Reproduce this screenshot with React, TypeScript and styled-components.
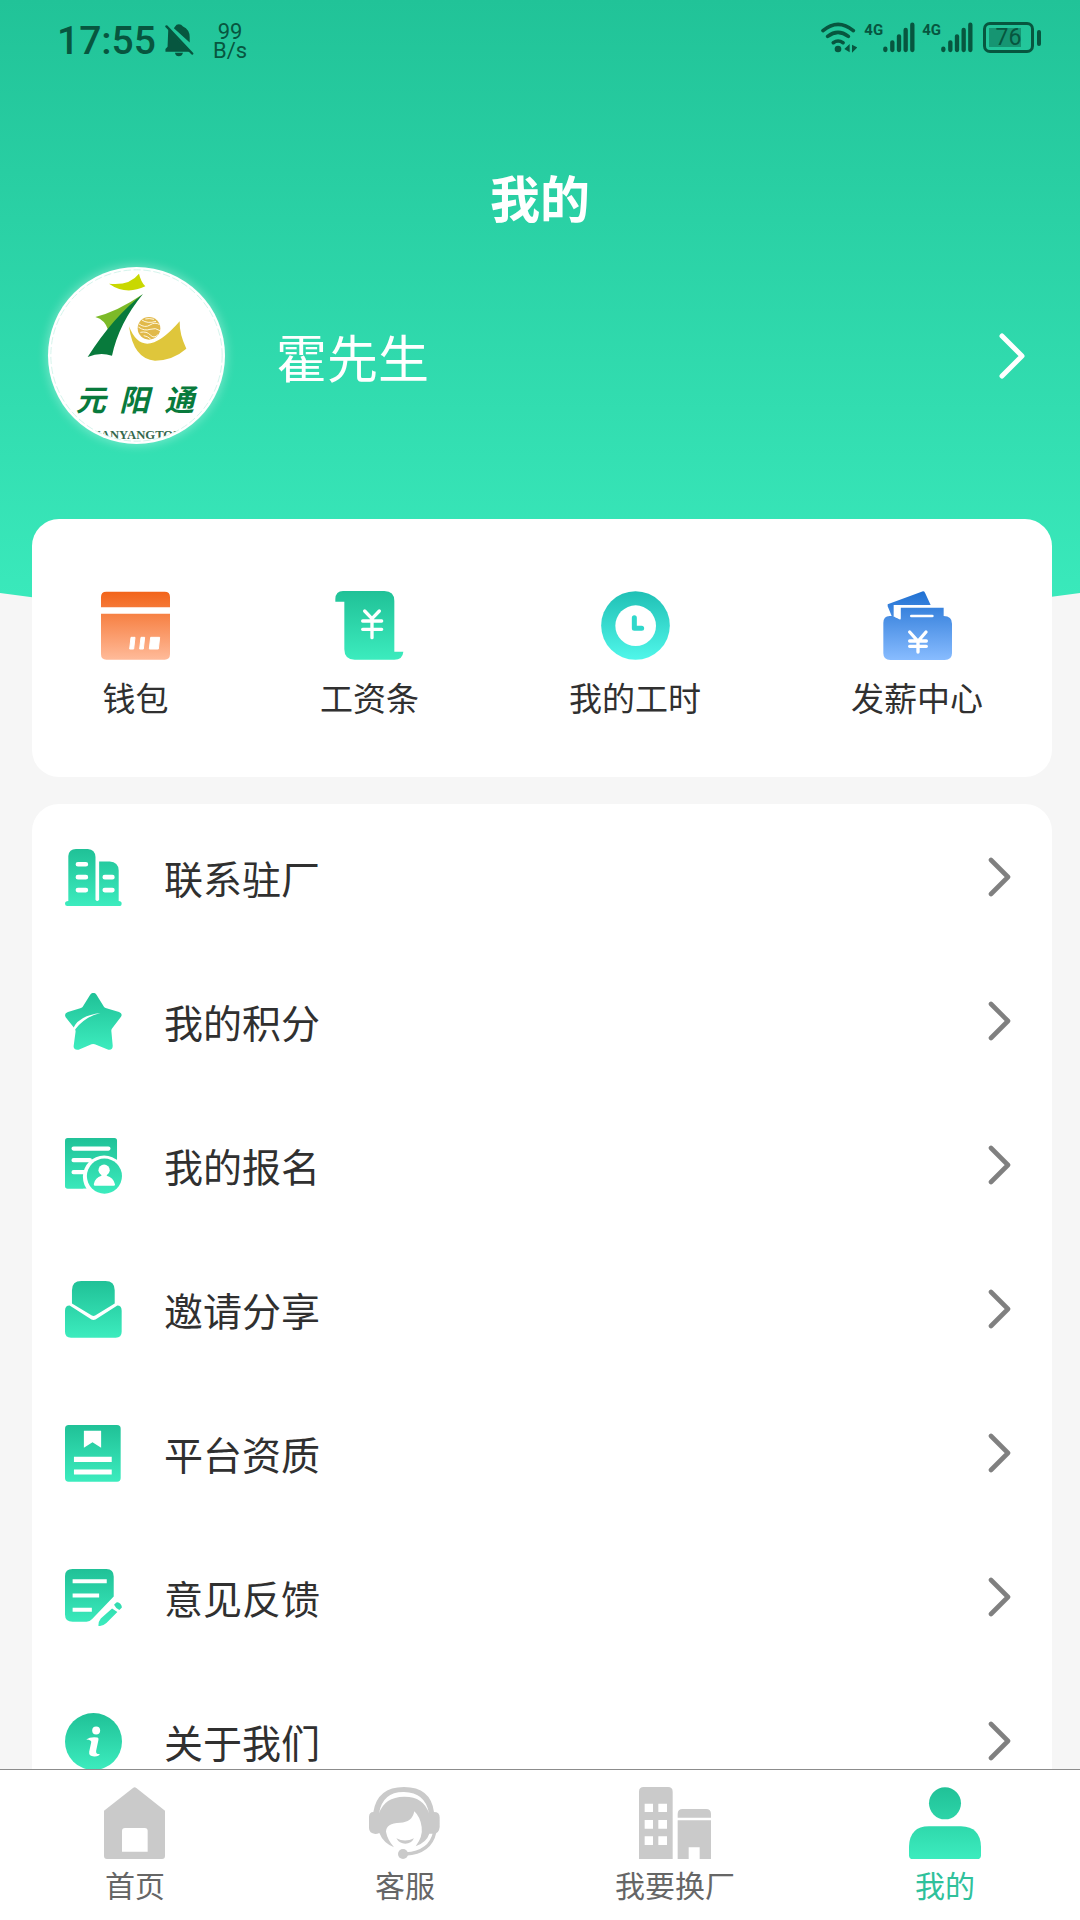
import React, { useId } from "react";
import styled, { createGlobalStyle } from "styled-components";

const GlobalStyle = createGlobalStyle`
  *, *::before, *::after { box-sizing: border-box; }
  body {
    margin: 0;
    background: #f6f6f6;
    color: #303030;
    font-family: "Noto Sans CJK SC", sans-serif;
  }
  h1, p, ul { margin: 0; padding: 0; }
  ul { list-style: none; }
  a { color: inherit; text-decoration: none; }
  svg { display: block; flex: none; }
`;

const Screen = styled.div`
  display: flex;
  flex-direction: column;
  height: 100vh;
`;

const Content = styled.main`
  flex: 1;
  min-height: 0;
  overflow-y: auto;
  scrollbar-width: none;
`;

const Hero = styled.header`
  padding-bottom: 185px;
  background: linear-gradient(180deg, #21c398 0%, #3bebbd 100%);
  clip-path: ellipse(150% 100% at 50% 0);
  color: #fff;
`;

const StatusBar = styled.div`
  display: flex;
  align-items: flex-start;
  justify-content: space-between;
  height: 76px;
  padding: 22px 39px 0 57px;
  color: #07563f;
  font-family: Roboto, sans-serif;
`;

const StatusGroup = styled.div<{ $height: number; $gap: number }>`
  display: flex;
  align-items: center;
  gap: ${(p) => p.$gap}px;
  height: ${(p) => p.$height}px;
`;

const Clock = styled.time`
  font-size: 39px;
  font-weight: 500;
  line-height: 40px;
`;

const NetSpeed = styled.span`
  display: flex;
  flex-direction: column;
  align-items: center;
  margin-left: 10px;
  font-size: 22px;
  line-height: 19px;
`;

const Signal = styled.span`
  display: flex;
  align-items: flex-start;
`;

const NetType = styled.span`
  font-size: 15px;
  font-weight: 700;
  line-height: 16px;
`;

const Battery = styled.span`
  display: flex;
  align-items: center;
  gap: 3px;
  margin-left: 3px;
  &::after {
    content: "";
    width: 4px;
    height: 16px;
    border-radius: 2px;
    background: currentColor;
  }
`;

const BatteryCell = styled.span`
  width: 51px;
  height: 31px;
  padding: 3px;
  border: 3px solid currentColor;
  border-radius: 7px;
  font-size: 23px;
  line-height: 20px;
  text-align: center;
  background: linear-gradient(#169572, #169572) 3px 3px / 32px 19px no-repeat;
`;

const PageTitle = styled.h1`
  padding-top: 90px;
  font-size: 50px;
  font-weight: 700;
  line-height: 60px;
  text-align: center;
`;

const Profile = styled.a`
  display: flex;
  align-items: center;
  margin-top: 41px;
  padding: 0 55px 0 48px;
`;

const Avatar = styled.span`
  width: 177px;
  height: 177px;
  border-radius: 50%;
  background: #fff;
  box-shadow: 0 0 10px 2px rgba(255, 255, 255, 0.3);
`;

const UserName = styled.span`
  flex: 1;
  padding-left: 51px;
  font-size: 51px;
  line-height: 60px;
`;

const Card = styled.section`
  position: relative;
  margin: 0 28px 27px 32px;
  border-radius: 27px;
  background: #fff;
`;

const QuickCard = styled(Card)`
  margin-top: -110px;
  padding: 72px 69px 60px;
`;

const MenuCard = styled(Card)`
  padding: 1px 0;
`;

const QuickList = styled.ul`
  display: flex;
  justify-content: space-between;
`;

const QuickLink = styled.a`
  display: flex;
  flex-direction: column;
  align-items: center;
  gap: 17px;
  font-size: 33px;
  line-height: 40px;
`;

const MenuLink = styled.a`
  display: flex;
  align-items: center;
  height: 144px;
  padding: 0 41px 0 33px;
`;

const MenuLabel = styled.span`
  flex: 1;
  padding-left: 42px;
  font-size: 39px;
  line-height: 48px;
`;

const TabBar = styled.nav`
  display: grid;
  grid-template-columns: repeat(4, 1fr);
  border-top: 1px solid #8c8c8c;
  background: #fff;
`;

const Tab = styled.a<{ $active?: boolean }>`
  display: flex;
  flex-direction: column;
  align-items: center;
  gap: 7px;
  padding: 17px 0 18px;
  font-size: 30px;
  line-height: 36px;
  color: ${(p) => (p.$active ? "#2fc19b" : "#666")};
`;

type Tone = "green" | "orange" | "teal" | "blue";
const tones: Record<Tone, [string, string]> = {
  green: ["#20c197", "#3cecbe"],
  orange: ["#f26318", "#ffbb9a"],
  teal: ["#20c0b5", "#50f7ea"],
  blue: ["#1f70d2", "#88bcff"],
};

type IconProps = {
  size: number;
  x: number;
  y: number;
  span: number;
  tone?: Tone;
  children: React.ReactNode;
};

function GradientIcon({ size, x, y, span, tone = "green", children }: IconProps) {
  const id = useId();
  return (
    <svg width={size} height={size} viewBox={`${x} ${y} ${span} ${span}`} fill={`url(#${id})`} aria-hidden="true">
      <defs>
        <linearGradient id={id} gradientUnits="userSpaceOnUse" x1={x} x2={x} y1={y} y2={y + span}>
          <stop offset="0" stopColor={tones[tone][0]} />
          <stop offset="1" stopColor={tones[tone][1]} />
        </linearGradient>
      </defs>
      {children}
    </svg>
  );
}

const Chevron = ({ large }: { large?: boolean }) => (
  <svg
    width={large ? 26 : 23}
    height={large ? 46 : 40}
    viewBox={large ? "0 0 26 46" : "0 0 23 40"}
    fill="none"
    stroke={large ? "#fff" : "#808080"}
    strokeWidth={large ? 5 : 4.6}
    strokeLinecap="round"
    strokeLinejoin="round"
    aria-hidden="true"
  >
    <path d={large ? "M3 3 23 23 3 43" : "M3 3 20 20 3 37"} />
  </svg>
);

const MutedBell = () => (
  <svg width="29" height="33" viewBox="480 68 82 94" fill="currentColor" aria-hidden="true">
    <path d="M508 76Q512 69 519 69T531 75Q550 84 550 105V121L505 80ZM489 84 550 147H481V139L487 133Z" />
    <path d="M508 150H531Q528 160 519 160T508 150Z" />
    <path d="M484 75 557 152" stroke="currentColor" strokeWidth="7" strokeLinecap="round" />
  </svg>
);

const Wifi = () => (
  <svg width="36" height="31" viewBox="129 65 108 93" fill="currentColor" aria-hidden="true">
    <g fill="none" stroke="currentColor" strokeWidth="11" strokeLinecap="round">
      <path d="M135 91Q180 53 226 91M149 108Q180 84 211 108M166 127Q180 117 195 127" />
    </g>
    <circle cx="180" cy="146" r="10" />
    <path d="M199 146 215 131V156ZM222 133V157L238 141Z" />
  </svg>
);

const SignalBars = () => (
  <svg width="32" height="31" viewBox="307 65 96 93" stroke="currentColor" strokeWidth="13" strokeLinecap="round" aria-hidden="true">
    <path d="M314 145V149M335 126V149M355 108V149M375 89V149M395 73V149" />
  </svg>
);

const Logo = () => {
  const clip = useId();
  return (
    <svg width="177" height="177" viewBox="54 51 531 531" role="img" aria-label="元阳通">
      <defs>
        <clipPath id={clip}>
          <circle cx="319.5" cy="316.5" r="256" />
        </clipPath>
      </defs>
      <circle cx="319.5" cy="316.5" r="257" fill="none" stroke="#bfeee2" strokeWidth="2" strokeDasharray="22 8" />
      <path d="M237 101Q298 108 327 71Q332 94 346 109Q288 137 237 101Z" fill="#c9d800" />
      <path d="M338 133Q262 185 196 201Q225 209 235 241Z" fill="#7cba28" />
      <path d="M339 132Q250 200 173 321Q210 305 246 317Q267 219 339 132Z" fill="#087a3c" />
      <path d="M297 229Q340 340 449 214Q448 253 469 296Q429 331 375 332Q310 328 297 229Z" fill="#dfc63b" />
      <circle cx="357" cy="235" r="34" fill="#e1b94a" />
      <path
        d="M327 222Q345 235 360 225T389 224M325 231Q343 244 360 238T390 242M336 210Q352 222 378 214M331 247Q350 243 361 255T384 254M346 207Q356 204 372 208M341 257Q352 258 362 267"
        fill="none"
        stroke="#fff7dc"
        strokeWidth="3"
      />
      <g clipPath={`url(#${clip})`} fill="#087a3c" textAnchor="middle">
        <g fontFamily="'Noto Sans CJK SC', sans-serif" fontStyle="italic" fontWeight="700" fontSize="90">
          <text x="182" y="484">元</text>
          <text x="313" y="482">阳</text>
          <text x="448" y="482">通</text>
        </g>
        <text x="322" y="567" fontFamily="'Liberation Serif', serif" fontWeight="700" fontSize="38" fill="#35684d">
          YUANYANGTONG
        </text>
      </g>
    </svg>
  );
};

const quickLinks = [
  {
    label: "钱包",
    icon: (
      <GradientIcon size={69} x={123} y={94} span={207} tone="orange">
        <path d="M123 143V112Q123 96 139 96H314Q330 96 330 112V143ZM123 162H330V284Q330 300 314 300H139Q123 300 123 284Z" />
        <g fill="#fff" stroke="#fff" strokeWidth="3" strokeLinejoin="round">
          <path d="M213 233H225L221 268H209ZM243 233H254L250 268H239ZM272 233H299L295 268H268Z" />
        </g>
      </GradientIcon>
    ),
  },
  {
    label: "工资条",
    icon: (
      <GradientIcon size={69} x={827} y={94} span={207}>
        <path d="M828 126V118Q829 94 851 94H975Q1005 94 1005 124V276H1032Q1030 300 1005 300H886Q855 300 855 269V126Z" />
        <path d="M916 154 938 177 960 154M938 177V234M910 184H967M910 209H967" fill="none" stroke="#fff" strokeWidth="10" strokeLinecap="round" />
      </GradientIcon>
    ),
  },
  {
    label: "我的工时",
    icon: (
      <GradientIcon size={69} x={180} y={93} span={207} tone="teal">
        <circle cx="283.5" cy="196.5" r="103" />
        <circle cx="284" cy="197" r="61" fill="#fff" />
        <path d="M280 173V205H302" fill="none" stroke="#2fd8cb" strokeWidth="15" strokeLinecap="round" strokeLinejoin="round" />
      </GradientIcon>
    ),
  },
  {
    label: "发薪中心",
    icon: (
      <GradientIcon size={69} x={1026} y={93} span={207} tone="blue">
        <path d="M1040 133 1146 94Q1150 94 1152 98L1169 135H1058V168H1052L1040 139Z" />
        <path d="M1046 168H1056L1078 179V143H1208V168Q1233 168 1233 191V280Q1233 300 1211 300H1048Q1027 300 1027 280V189Q1027 168 1046 168Z" />
        <path d="M1063 141H1079V177L1061 171Z" fill="#fff" />
        <path d="M1111 168H1174" stroke="#fff" strokeWidth="8" strokeLinecap="round" />
        <path d="M1106 216 1131 244 1155 216M1131 244V276M1106 243H1156M1106 259H1156" fill="none" stroke="#fff" strokeWidth="10" strokeLinecap="round" />
      </GradientIcon>
    ),
  },
];

const menuItems = [
  {
    label: "联系驻厂",
    icon: (
      <GradientIcon size={57} x={195} y={1045} span={172}>
        <path d="M205 1202V1066Q207 1045 228 1045H264Q286 1047 287 1069V1198Q292 1206 298 1198V1083H330Q356 1084 357 1110V1202Q366 1202 366 1210T359 1217H202Q195 1217 195 1210T205 1202Z" />
        <path d="M234 1091H258M234 1130H258M234 1169H258M315 1130H338M315 1169H338" stroke="#fff" strokeWidth="14" strokeLinecap="round" />
      </GradientIcon>
    ),
  },
  {
    label: "我的积分",
    icon: (
      <GradientIcon size={57} x={45} y={37} span={172}>
        <path d="M121 42Q131 31 140 42L163 79Q165 82 170 83L208 94Q220 98 214 109L187 144Q184 148 185 153L189 196Q189 210 176 208L135 192Q130 190 125 192L86 208Q71 210 71 198L77 153Q77 149 74 144L47 110Q41 98 54 94L91 83Q95 82 98 79Z" />
        <path d="M68 147Q85 105 152 97Q108 107 78 144L73 151Z" fill="#fff" />
      </GradientIcon>
    ),
  },
  {
    label: "我的报名",
    icon: (
      <GradientIcon size={57} x={45} y={468} span={172}>
        <rect x="45" y="471" width="157" height="153" rx="8" />
        <path d="M71 503H176M71 538H120M71 574H110" stroke="#fff" strokeWidth="13" strokeLinecap="round" />
        <circle cx="163" cy="588" r="64" fill="#fff" />
        <path d="M190 624H218V645H100V624Z" fill="#fff" />
        <circle cx="164" cy="586" r="53" />
        <circle cx="163" cy="568" r="17" fill="#fff" />
        <path d="M155 576H171V585Q191 590 196 611Q196 615 192 615H135Q131 615 132 610Q136 590 155 585Z" fill="#fff" />
      </GradientIcon>
    ),
  },
  {
    label: "邀请分享",
    icon: (
      <GradientIcon size={57} x={45} y={902} span={172}>
        <path d="M45 992Q45 976 59 976L125 1018Q131 1021 137 1018L203 976Q216 976 216 992V1055Q216 1073 198 1073H63Q45 1073 45 1055Z" />
        <path d="M66 970V930Q66 902 94 902H167Q195 902 195 930V970L136 1006Q131 1009 126 1006Z" />
      </GradientIcon>
    ),
  },
  {
    label: "平台资质",
    icon: (
      <GradientIcon size={57} x={45} y={73} span={172}>
        <rect x="45" y="73" width="168" height="171" rx="11" />
        <path d="M102 90H154V142L128 125 102 142ZM72 169H186V185H72ZM72 207H186V222H72Z" fill="#fff" />
      </GradientIcon>
    ),
  },
  {
    label: "意见反馈",
    icon: (
      <GradientIcon size={57} x={45} y={506} span={172}>
        <path d="M45 527Q45 506 68 506H170Q192 506 192 529V589L127 657Q120 665 110 665H68Q45 665 45 643Z" />
        <path d="M68 543H171M68 586H148M68 629H126" stroke="#fff" strokeWidth="12" />
        <path d="M187 625 203 636 170 669Q159 679 146 678Q145 665 153 655ZM193 614 200 607Q206 604 212 611T216 623L209 630Q198 625 193 614Z" />
      </GradientIcon>
    ),
  },
  {
    label: "关于我们",
    icon: (
      <GradientIcon size={57} x={45} y={937} span={172}>
        <circle cx="131" cy="1023" r="86" />
        <circle cx="139" cy="990" r="12" fill="#fff" />
        <path d="M109 1017Q122 1008 143 1011Q147 1012 146 1018L139 1051Q137 1062 150 1061Q148 1068 135 1068Q116 1069 118 1054L124 1026Q126 1018 109 1017Z" fill="#fff" />
      </GradientIcon>
    ),
  },
];

const HomeIcon = () => (
  <svg width="72" height="72" viewBox="117 81 216 216" fill="#cacaca" aria-hidden="true">
    <path d="M132 152 219 84Q224 80 229 84L315 152V288Q315 297 306 297H141Q132 297 132 288Z" />
    <path d="M186 275V213Q186 204 195 204H254Q263 204 263 213V275Z" fill="#fff" />
  </svg>
);

const ServiceIcon = () => (
  <svg width="72" height="72" viewBox="927 81 216 216" fill="#cacaca" aria-hidden="true">
    <path d="M940 156Q952 81 1032 81T1122 156Q1139 156 1139 172V201Q1137 221 1121 221H1108Q1100 246 1067 259Q1089 230 1085 201Q1081 171 1063 154Q1056 188 1020 188Q978 190 978 215Q982 238 1002 262Q970 249 958 219Q952 222 946 222Q927 220 927 204V170Q928 156 940 156ZM957 160Q974 111 1032 110T1107 160Q1096 97 1032 96T957 160Z" fillRule="evenodd" />
    <path d="M1009 235Q1035 248 1062 235Q1054 251 1036 251T1009 235Z" />
    <path d="M1124 217Q1111 277 1037 282" fill="none" stroke="#cacaca" strokeWidth="10" />
    <circle cx="1029" cy="282" r="15" />
  </svg>
);

const FactoryIcon = () => (
  <svg width="72" height="72" viewBox="117 81 216 216" fill="#cacaca" aria-hidden="true">
    <path d="M117 297V95Q117 81 131 81H204Q218 81 218 95V297ZM233 173V162Q233 147 248 147H318Q333 147 333 162V173ZM233 181H333V297H299V262H266V297H233Z" />
    <path d="M134 131H159V156H134ZM175 131H201V156H175ZM134 180H159V206H134ZM175 180H201V206H175ZM134 229H159V255H134ZM175 229H201V255H175Z" fill="#fff" />
  </svg>
);

const MeIcon = () => (
  <GradientIcon size={72} x={927} y={81} span={216}>
    <circle cx="1035" cy="130" r="48" />
    <path d="M927 287V260Q929 199 987 199H1083Q1141 200 1143 260V287Q1142 297 1132 297H938Q928 297 927 287Z" />
  </GradientIcon>
);

const tabs = [
  { label: "首页", icon: <HomeIcon /> },
  { label: "客服", icon: <ServiceIcon /> },
  { label: "我要换厂", icon: <FactoryIcon /> },
  { label: "我的", icon: <MeIcon />, active: true },
];

export default function App() {
  return (
    <Screen>
      <GlobalStyle />
      <Content>
        <Hero>
          <StatusBar>
            <StatusGroup $height={37} $gap={9}>
              <Clock>17:55</Clock>
              <MutedBell />
              <NetSpeed>
                <span>99</span>
                <span>B/s</span>
              </NetSpeed>
            </StatusGroup>
            <StatusGroup $height={31} $gap={7}>
              <Wifi />
              <Signal>
                <NetType>4G</NetType>
                <SignalBars />
              </Signal>
              <Signal>
                <NetType>4G</NetType>
                <SignalBars />
              </Signal>
              <Battery>
                <BatteryCell>76</BatteryCell>
              </Battery>
            </StatusGroup>
          </StatusBar>
          <PageTitle>我的</PageTitle>
          <Profile href="#profile">
            <Avatar>
              <Logo />
            </Avatar>
            <UserName>霍先生</UserName>
            <Chevron large />
          </Profile>
        </Hero>
        <QuickCard>
          <QuickList>
            {quickLinks.map((item) => (
              <li key={item.label}>
                <QuickLink href="#quick">
                  {item.icon}
                  {item.label}
                </QuickLink>
              </li>
            ))}
          </QuickList>
        </QuickCard>
        <MenuCard>
          <ul>
            {menuItems.map((item) => (
              <li key={item.label}>
                <MenuLink href="#menu">
                  {item.icon}
                  <MenuLabel>{item.label}</MenuLabel>
                  <Chevron />
                </MenuLink>
              </li>
            ))}
          </ul>
        </MenuCard>
      </Content>
      <TabBar>
        {tabs.map((tab) => (
          <Tab key={tab.label} href="#tab" $active={tab.active} aria-current={tab.active ? "page" : undefined}>
            {tab.icon}
            {tab.label}
          </Tab>
        ))}
      </TabBar>
    </Screen>
  );
}
